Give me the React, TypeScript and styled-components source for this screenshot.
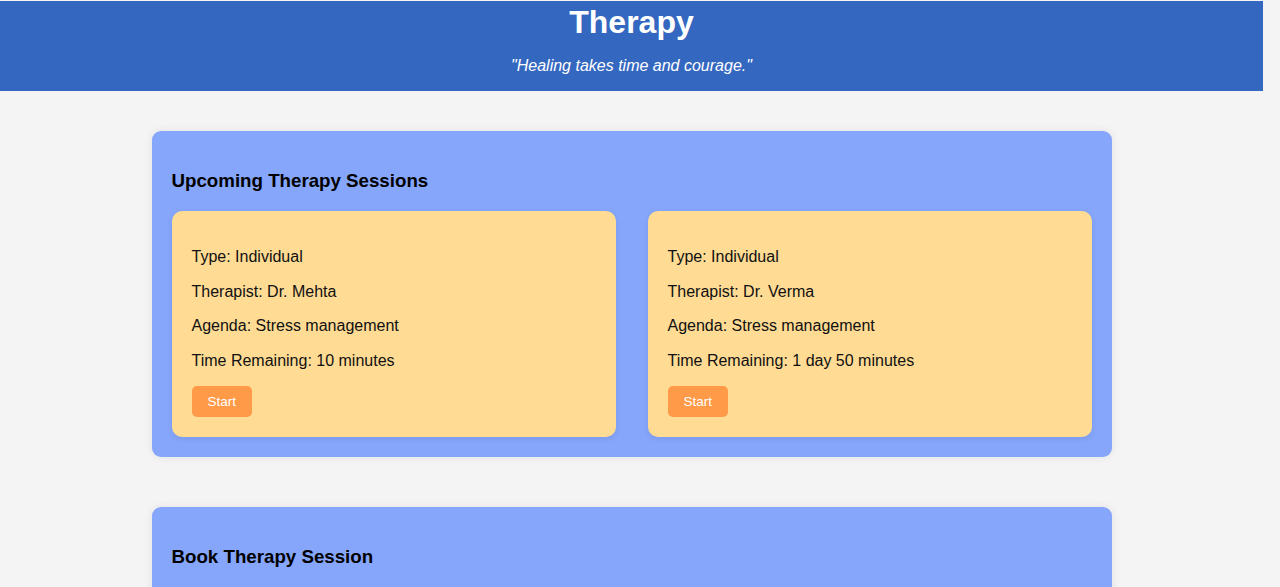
import styled, { createGlobalStyle } from 'styled-components'

type TSession = {
    type: string,
    therapist: string,
    agenda: string,
    remaining: string
}

const sessions: Array<TSession> = [
    { type: 'Individual', therapist: 'Dr. Mehta', agenda: 'Stress management', remaining: '10 minutes' },
    { type: 'Individual', therapist: 'Dr. Verma', agenda: 'Stress management', remaining: '1 day 50 minutes' },
]

function App(){
    return (
        <>
            <GlobalStyle />
            <Header>
                <Title>Therapy</Title>
                <Quote>"Healing takes time and courage."</Quote>
            </Header>
            <Main>
                <Section>
                    <SectionTitle>Upcoming Therapy Sessions</SectionTitle>
                    <SessionGrid>
                        {sessions.map((s) => (
                            <SessionCard key={s.therapist}>
                                <Line>Type: {s.type}</Line>
                                <Line>Therapist: {s.therapist}</Line>
                                <Line>Agenda: {s.agenda}</Line>
                                <Line>Time Remaining: {s.remaining}</Line>
                                <StartButton>Start</StartButton>
                            </SessionCard>
                        ))}
                    </SessionGrid>
                </Section>
                <Section>
                    <SectionTitle>Book Therapy Session</SectionTitle>
                    <Form>
                        <Label>Therapist</Label>
                        <Select>
                            <option>Dr. Mehta</option>
                            <option>Dr. Verma</option>
                        </Select>
                        <Label>Date</Label>
                        <Input type="date" />
                        <StartButton>Book</StartButton>
                    </Form>
                </Section>
            </Main>
        </>
    )
}

export default App

const GlobalStyle = createGlobalStyle`
    html, body {
        margin: 0;
        padding: 0;
        background: #f4f4f4;
        font-family: "Liberation Sans", Arial, sans-serif;
        color: #000000;
    }
    /* the reference page was laid out beside a 17px classic scrollbar */
    #root {
        width: calc(100% - 17px);
    }
`;

const Header = styled.header`
    background-color: #3467c0;
    color: #FFFFFF;
    text-align: center;
    padding: 3px 0 16px;
    margin-top: 1px;
`;

const Title = styled.h1`
    margin: 0 0 16px;
    font-size: 32px;
    line-height: 37px;
    font-weight: 700;
`;

const Quote = styled.p`
    margin: 0;
    font-size: 16px;
    font-style: italic;
`;

const Main = styled.main`
    display: flex;
    flex-direction: column;
    align-items: center;
    gap: 50px;
    padding: 40px 0 40px;
`;

const Section = styled.section`
    width: 960px;
    box-sizing: border-box;
    padding: 20px;
    background-color: #86a6fb;
    border-radius: 9px;
    box-shadow: 0px 0px 10px rgba(0, 0, 0, 0.08);
`;

const SectionTitle = styled.h3`
    margin: 19px 0;
    font-size: 18.72px;
    line-height: 22px;
    font-weight: 700;
`;

const SessionGrid = styled.div`
    display: grid;
    grid-template-columns: 1fr 1fr;
    gap: 32px;
`;

const SessionCard = styled.div`
    background-color: #ffdb94;
    border-radius: 10px;
    padding: 21px 20px 20px;
    box-shadow: 0px 2px 6px rgba(0, 0, 0, 0.08);
`;

const Line = styled.p`
    margin: 16px 0;
    font-size: 16px;
    line-height: 18.67px;
    color: #111111;
    &:last-of-type {
        margin-bottom: 15px;
    }
`;

const StartButton = styled.button`
    display: inline-block;
    padding: 8px 16px;
    border: none;
    border-radius: 5px;
    background-color: #ff9a48;
    color: #FFFFFF;
    font-family: "Liberation Sans", Arial, sans-serif;
    font-size: 13.5px;
    line-height: 15px;
    cursor: pointer;
`;

const Form = styled.div`
    display: flex;
    flex-direction: column;
    align-items: flex-start;
    gap: 10px;
`;

const Label = styled.label`
    font-size: 16px;
`;

const Select = styled.select`
    width: 300px;
    padding: 6px;
`;

const Input = styled.input`
    width: 286px;
    padding: 6px;
`;
